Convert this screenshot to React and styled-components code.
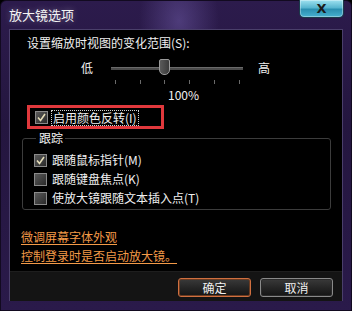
import React from 'react';
import styled, { createGlobalStyle } from 'styled-components';

const Global = createGlobalStyle`
  html, body { margin: 0; padding: 0; background: #000; }
  body { font-family: "Noto Sans CJK SC", "Noto Sans", sans-serif; }
`;

const Window = styled.div`
  position: relative;
  width: 352px;
  height: 311px;
  box-sizing: border-box;
  padding: 0 8px 9px 8px;
  display: flex;
  flex-direction: column;
  background:
    radial-gradient(ellipse 40px 60px at 178px 20px, rgba(120, 100, 180, 0.45), transparent),
    linear-gradient(180deg, #2c1b4c 0%, #24163f 40%, #2a1a4a 100%);
  border: 1px solid #120a20;
  border-radius: 6px 6px 0 0;
`;

const TitleBar = styled.div`
  height: 28px;
  display: flex;
  justify-content: space-between;
  align-items: flex-start;
  flex-shrink: 0;
`;

const Title = styled.span`
  margin-top: 5px;
  color: #f4f4f4;
  font-size: 13px;
  line-height: 17px;
  text-shadow: 0 0 6px rgba(255, 255, 255, 0.35);
`;

const CloseButton = styled.div`
  width: 45px;
  height: 18px;
  margin-right: -1px;
  margin-top: -1px;
  box-sizing: border-box;
  border: 1px solid #1a3a4a;
  border-top: none;
  border-radius: 0 0 5px 5px;
  background: linear-gradient(180deg, #9fe2f0 0%, #58b6d0 45%, #2b8fb0 55%, #47b0cf 100%);
  box-shadow: inset 0 0 0 1px rgba(255, 255, 255, 0.35);
  display: flex;
  align-items: center;
  justify-content: center;
  color: #1a1a1a;
  font-family: "DejaVu Sans", sans-serif;
  font-weight: bold;
  font-size: 13px;
`;

const Body = styled.div`
  flex: 1;
  display: flex;
  flex-direction: column;
  border: 1px solid #4a3f6a;
  border-bottom: none;
  background: #000;
  color: #f0f0f0;
  font-size: 12px;
  line-height: 14px;
`;

const Panel = styled.div`
  height: 241px;
  box-sizing: border-box;
  padding: 6px 0 0 11px;
  display: flex;
  flex-direction: column;
`;

const Heading = styled.div`
  margin-left: 6px;
`;

const SliderRow = styled.div`
  margin-top: 8px;
  margin-left: 60px;
  height: 20px;
  display: flex;
  align-items: center;
`;

const Track = styled.div`
  position: relative;
  width: 132px;
  height: 20px;
  margin: 0 15px 0 18px;
  &::before {
    content: '';
    position: absolute;
    left: 0;
    right: 0;
    top: 9px;
    height: 2px;
    background: #4a4a4a;
    border-top: 1px solid #6a6a6a;
  }
`;

const Thumb = styled.div`
  position: absolute;
  left: 48px;
  top: 1px;
  width: 9px;
  height: 14px;
  background: linear-gradient(90deg, #5a5a5a, #3a3a3a);
  border: 1px solid #9a9a9a;
  border-radius: 2px 2px 5px 5px;
`;

const Tick = styled.div`
  position: absolute;
  top: 22px;
  width: 1px;
  height: 4px;
  background: #6a6a6a;
`;

const Percent = styled.div`
  margin-top: 10px;
  margin-left: 147px;
`;

const Highlight = styled.div`
  margin-top: 3px;
  margin-left: 6px;
  width: 137px;
  height: 24px;
  box-sizing: border-box;
  border: 3px solid #e0383c;
  padding: 1px 0 0 5px;
  display: flex;
  align-items: center;
`;

const Check = styled.span`
  width: 13px;
  height: 13px;
  box-sizing: border-box;
  flex-shrink: 0;
  border: 1px solid #8a8a8a;
  background: linear-gradient(135deg, #5a5a5a, #2a2a2a);
  display: flex;
  align-items: center;
  justify-content: center;
  svg { display: block; }
`;

const Label = styled.span`
  margin-left: 3px;
  padding: 0 1px;
  border: 1px dotted ${({ $focus }) => ($focus ? '#d0d0d0' : 'transparent')};
  white-space: nowrap;
`;

const Group = styled.fieldset`
  margin: 2px 11px 0 1px;
  padding: 8px 0 4px 11px;
  border: 1px solid #3c3c3c;
  border-radius: 3px;
  display: flex;
  flex-direction: column;
  gap: 5px;
  legend {
    padding: 0 2px 0 3px;
    margin-left: 2px;
    color: #f0f0f0;
  }
`;

const Row = styled.div`
  display: flex;
  align-items: center;
  height: 14px;
`;

const Links = styled.div`
  margin-top: 20px;
  display: flex;
  flex-direction: column;
  gap: 5px;
`;

const LinkText = styled.a`
  color: #f39a48;
  text-decoration: underline;
  text-underline-offset: 2px;
  width: max-content;
  cursor: pointer;
`;

const ButtonBar = styled.div`
  flex: 1;
  background: #141414;
  border-top: 1px solid #1e1e1e;
  display: flex;
  justify-content: flex-end;
  align-items: flex-start;
  padding: 6px 9px 0 0;
  gap: 9px;
`;

const Button = styled.button`
  width: 73px;
  height: 19px;
  padding: 0;
  border-radius: 3px;
  border: 1px solid ${({ $primary }) => ($primary ? '#d07040' : '#8a8a8a')};
  box-shadow: ${({ $primary }) => ($primary ? 'inset 0 0 0 1px #6a3a20' : 'inset 0 0 0 1px #2a2a2a')};
  background: linear-gradient(180deg, #3a3a3a 0%, #262626 50%, #141414 100%);
  color: #f0f0f0;
  font-family: "Noto Sans CJK SC", sans-serif;
  font-size: 12px;
  line-height: 14px;
`;

const CheckMark = ({ on }) => (
  <Check>
    {on && (
      <svg width="9" height="9" viewBox="0 0 9 9">
        <path d="M1 4.5 L3.5 7.5 L8 1" stroke="#e4dcb8" strokeWidth="1.6" fill="none" />
      </svg>
    )}
  </Check>
);

const ticks = [4, 29, 53, 78, 103, 128];

export default function App() {
  return (
    <>
      <Global />
      <Window>
        <TitleBar>
          <Title>放大镜选项</Title>
          <CloseButton>X</CloseButton>
        </TitleBar>
        <Body>
          <Panel>
            <Heading>设置缩放时视图的变化范围(S):</Heading>
            <SliderRow>
              <span>低</span>
              <Track>
                <Thumb />
                {ticks.map((t) => (
                  <Tick key={t} style={{ left: t }} />
                ))}
              </Track>
              <span>高</span>
            </SliderRow>
            <Percent>100%</Percent>
            <Highlight>
              <CheckMark on />
              <Label $focus>启用颜色反转(I)</Label>
            </Highlight>
            <Group>
              <legend>跟踪</legend>
              <Row>
                <CheckMark on />
                <Label>跟随鼠标指针(M)</Label>
              </Row>
              <Row>
                <CheckMark />
                <Label>跟随键盘焦点(K)</Label>
              </Row>
              <Row>
                <CheckMark />
                <Label>使放大镜跟随文本插入点(T)</Label>
              </Row>
            </Group>
            <Links>
              <LinkText>微调屏幕字体外观</LinkText>
              <LinkText>控制登录时是否启动放大镜。</LinkText>
            </Links>
          </Panel>
          <ButtonBar>
            <Button $primary>确定</Button>
            <Button>取消</Button>
          </ButtonBar>
        </Body>
      </Window>
    </>
  );
}
